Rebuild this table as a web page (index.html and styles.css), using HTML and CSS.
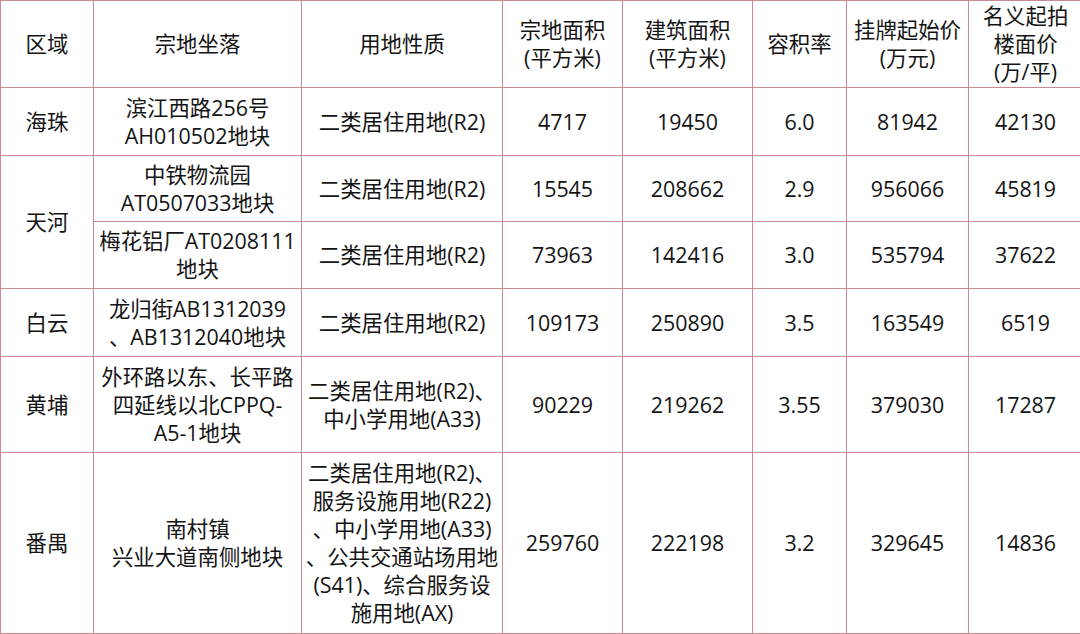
FILE: index.html
```html
<!DOCTYPE html>
<html lang="zh-CN">
<head>
<meta charset="utf-8">
<title>土地出让表</title>
<link rel="stylesheet" href="styles.css">
</head>
<body>
<table class="land">
  <colgroup>
    <col class="c1"><col class="c2"><col class="c3"><col class="c4"><col class="c5"><col class="c6"><col class="c7"><col class="c8">
  </colgroup>
  <tr class="r-head">
    <td>区域</td>
    <td>宗地坐落</td>
    <td>用地性质</td>
    <td>宗地面积<br>(平方米)</td>
    <td>建筑面积<br>(平方米)</td>
    <td>容积率</td>
    <td>挂牌起始价<br>(万元)</td>
    <td>名义起拍<br>楼面价<br>(万/平)</td>
  </tr>
  <tr class="r1">
    <td>海珠</td>
    <td>滨江西路256号<br>AH010502地块</td>
    <td>二类居住用地(R2)</td>
    <td>4717</td>
    <td>19450</td>
    <td>6.0</td>
    <td>81942</td>
    <td>42130</td>
  </tr>
  <tr class="r2">
    <td rowspan="2">天河</td>
    <td>中铁物流园<br>AT0507033地块</td>
    <td>二类居住用地(R2)</td>
    <td>15545</td>
    <td>208662</td>
    <td>2.9</td>
    <td>956066</td>
    <td>45819</td>
  </tr>
  <tr class="r3">
    <td>梅花铝厂AT0208111<br>地块</td>
    <td>二类居住用地(R2)</td>
    <td>73963</td>
    <td>142416</td>
    <td>3.0</td>
    <td>535794</td>
    <td>37622</td>
  </tr>
  <tr class="r4">
    <td>白云</td>
    <td>龙归街AB1312039<br>、AB1312040地块</td>
    <td>二类居住用地(R2)</td>
    <td>109173</td>
    <td>250890</td>
    <td>3.5</td>
    <td>163549</td>
    <td>6519</td>
  </tr>
  <tr class="r5">
    <td>黄埔</td>
    <td>外环路以东、长平路<br>四延线以北CPPQ-<br>A5-1地块</td>
    <td>二类居住用地(R2)、<br>中小学用地(A33)</td>
    <td>90229</td>
    <td>219262</td>
    <td>3.55</td>
    <td>379030</td>
    <td>17287</td>
  </tr>
  <tr class="r6">
    <td>番禺</td>
    <td>南村镇<br>兴业大道南侧地块</td>
    <td>二类居住用地(R2)、<br>服务设施用地(R22)<br>、中小学用地(A33)<br>、公共交通站场用地<br>(S41)、综合服务设<br>施用地(AX)</td>
    <td>259760</td>
    <td>222198</td>
    <td>3.2</td>
    <td>329645</td>
    <td>14836</td>
  </tr>
</table>
</body>
</html>
```

FILE: styles.css
```css
html, body {
  margin: 0;
  padding: 0;
  background: #ffffff;
  overflow: hidden;
}

.land {
  border-collapse: collapse;
  table-layout: fixed;
  width: 1082px;
  font-family: "Open Sans", "Noto Sans CJK SC", sans-serif;
  font-size: 21.4px;
  line-height: 28px;
  color: #141414;
}

.land td {
  border: 1px solid #c98a91;
  text-align: center;
  vertical-align: middle;
  padding: 0;
  white-space: nowrap;
}

.c1 { width: 93px; }
.c2 { width: 208px; }
.c3 { width: 201px; }
.c4 { width: 120px; }
.c5 { width: 130px; }
.c6 { width: 94px; }
.c7 { width: 122px; }
.c8 { width: 114px; }

.r-head { height: 87px; }
.r1 { height: 68px; }
.r2 { height: 66px; }
.r3 { height: 67px; }
.r4 { height: 68px; }
.r5 { height: 96px; }
.r6 { height: 181px; }
```
